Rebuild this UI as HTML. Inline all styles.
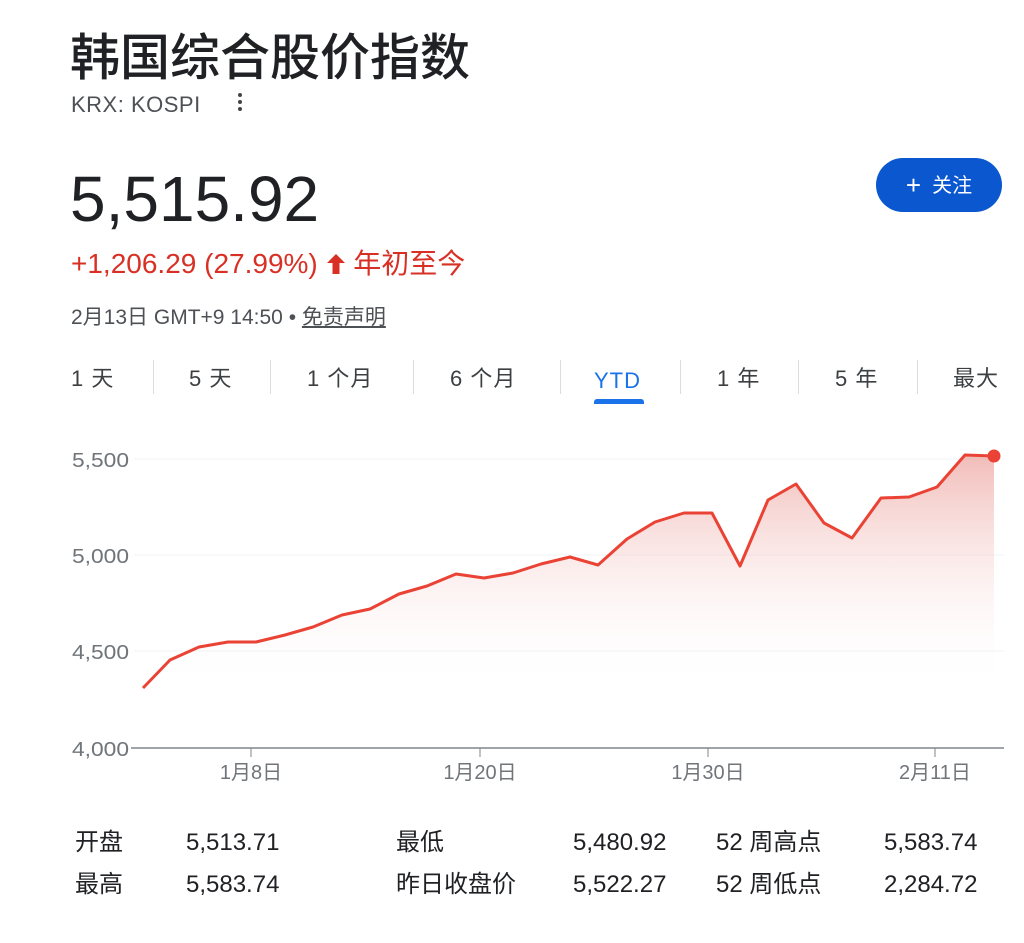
<!DOCTYPE html>
<html><head><meta charset="utf-8"><style>
body{margin:0;width:1024px;height:943px;background:#fff;font-family:"Liberation Sans","Noto Sans CJK SC",sans-serif;position:relative;overflow:hidden;color:#202124}
.a{position:absolute;white-space:nowrap}
.tab{position:absolute;top:364px;font-size:22px;line-height:30px;color:#3c4043;letter-spacing:1px}
.sep{position:absolute;top:360px;width:1px;height:34px;background:#dadce0}
.st{position:absolute;font-size:24px;line-height:30px;color:#202124}
</style></head><body>
<div class="a" style="left:70px;top:18px;font-size:50px;font-weight:500;color:#202124;letter-spacing:0px">韩国综合股价指数</div>
<div class="a" style="left:71px;top:91px;font-size:22px;line-height:28px;color:#4d5156;letter-spacing:0.5px">KRX: KOSPI</div>
<div class="a" style="left:238px;top:93px;width:4px;height:22px">
<div style="width:4px;height:4px;border-radius:2px;background:#444;margin-bottom:3px"></div><div style="width:4px;height:4px;border-radius:2px;background:#444;margin-bottom:3px"></div><div style="width:4px;height:4px;border-radius:2px;background:#444"></div></div>
<div class="a" style="left:70px;top:162px;font-size:64px;color:#202124">5,515.92</div>
<div class="a" style="left:876px;top:158px;width:126px;height:54px;border-radius:27px;background:#0b57d0;color:#fff;font-size:20px;line-height:54px;text-align:center"><span style="font-size:26px;vertical-align:-2px">+</span>&nbsp; 关注</div>
<div class="a" style="left:71px;top:247px;font-size:28px;line-height:34px;color:#d93025">+1,206.29 (27.99%) <svg width="20" height="22" viewBox="0 0 20 22" style="vertical-align:-2px"><path d="M10 1 L19 10 L13.5 10 L13.5 21 L6.5 21 L6.5 10 L1 10Z" fill="#d93025"/></svg> 年初至今</div>
<div class="a" style="left:71px;top:305px;font-size:21px;line-height:26px;color:#4d5156">2月13日 GMT+9 14:50 • <span style="text-decoration:underline">免责声明</span></div>
<div class="tab" style="left:71px">1 天</div>
<div class="sep" style="left:153px"></div>
<div class="tab" style="left:189px">5 天</div>
<div class="sep" style="left:270px"></div>
<div class="tab" style="left:307px">1 个月</div>
<div class="sep" style="left:413px"></div>
<div class="tab" style="left:450px">6 个月</div>
<div class="sep" style="left:560px"></div>
<div class="tab" style="left:594px;color:#1a73e8;top:366px">YTD</div>
<div class="a" style="left:594px;top:399px;width:50px;height:5px;background:#1a73e8;border-radius:3px 3px 0 0"></div>
<div class="sep" style="left:680px"></div>
<div class="tab" style="left:717px">1 年</div>
<div class="sep" style="left:798px"></div>
<div class="tab" style="left:835px">5 年</div>
<div class="sep" style="left:917px"></div>
<div class="tab" style="left:953px">最大</div>
<svg class="a" style="left:0;top:0" width="1024" height="800">
<defs><linearGradient id="g" x1="0" y1="455" x2="0" y2="690" gradientUnits="userSpaceOnUse"><stop offset="0" stop-color="#e8908a" stop-opacity=".6"/><stop offset="1" stop-color="#fff" stop-opacity="0"/></linearGradient></defs>
<g stroke="#f1f3f4" stroke-width="1"><line x1="134" y1="459" x2="1004" y2="459"/><line x1="134" y1="555" x2="1004" y2="555"/><line x1="134" y1="651" x2="1004" y2="651"/></g>
<g font-size="20" fill="#70757a" font-family="Liberation Sans" text-anchor="end"><text x="129" y="467" textLength="57" lengthAdjust="spacingAndGlyphs">5,500</text><text x="129" y="563" textLength="57" lengthAdjust="spacingAndGlyphs">5,000</text><text x="129" y="659" textLength="57" lengthAdjust="spacingAndGlyphs">4,500</text><text x="129" y="756" textLength="57" lengthAdjust="spacingAndGlyphs">4,000</text></g>
<path d="M143,688 L170,660 199,647 228,642 256,642 285,635 313,627 342,615 370,609 399,594 427,586 456,574 484,578 513,573 541,564 570,557 598,565 627,539 655,522 684,513 712,513 740,566 768,500 796,484 824,523 852,538 881,498 909,497 937,487 965,455 994,456 L994,690 L143,690Z" fill="url(#g)"/>
<path d="M143,688 L170,660 199,647 228,642 256,642 285,635 313,627 342,615 370,609 399,594 427,586 456,574 484,578 513,573 541,564 570,557 598,565 627,539 655,522 684,513 712,513 740,566 768,500 796,484 824,523 852,538 881,498 909,497 937,487 965,455 994,456" fill="none" stroke="#ea4335" stroke-width="3" stroke-linejoin="round"/>
<circle cx="994" cy="456" r="6.5" fill="#ea4335"/>
<line x1="131" y1="748" x2="1004" y2="748" stroke="#80868b" stroke-width="1.5"/>
<g stroke="#80868b"><line x1="251" y1="748" x2="251" y2="757"/><line x1="480" y1="748" x2="480" y2="757"/><line x1="708" y1="748" x2="708" y2="757"/><line x1="935" y1="748" x2="935" y2="757"/></g>
<g font-size="20" fill="#70757a" font-family="Liberation Sans,Noto Sans CJK SC" text-anchor="middle"><text x="251" y="779">1月8日</text><text x="480" y="779">1月20日</text><text x="708" y="779">1月30日</text><text x="935" y="779">2月11日</text></g>
</svg>
<div class="st" style="left:75px;top:828px">开盘</div>
<div class="st" style="left:186px;top:828px">5,513.71</div>
<div class="st" style="left:396px;top:828px">最低</div>
<div class="st" style="left:573px;top:828px">5,480.92</div>
<div class="st" style="left:716px;top:828px">52 周高点</div>
<div class="st" style="left:884px;top:828px">5,583.74</div>
<div class="st" style="left:75px;top:870px">最高</div>
<div class="st" style="left:186px;top:870px">5,583.74</div>
<div class="st" style="left:396px;top:870px">昨日收盘价</div>
<div class="st" style="left:573px;top:870px">5,522.27</div>
<div class="st" style="left:716px;top:870px">52 周低点</div>
<div class="st" style="left:884px;top:870px">2,284.72</div>
</body></html>
